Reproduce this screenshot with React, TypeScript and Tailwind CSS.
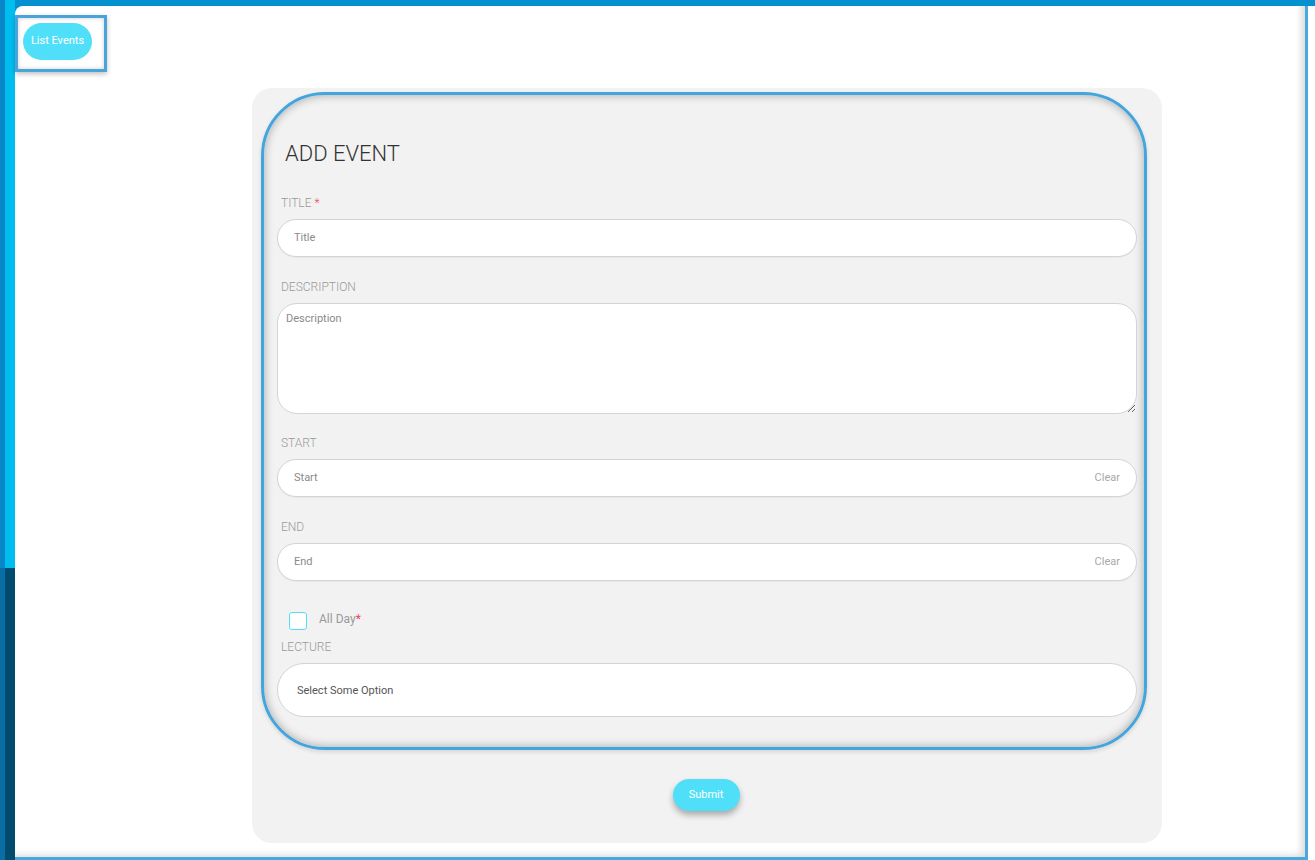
import React from "react";

function Label({ text, required }: { text: string; required?: boolean }) {
  return (
    <div className="pl-[4px] text-[12px] leading-[14px] font-light text-[#9a9a9a] uppercase">
      {text}
      {required && <span className="text-[#f0435a] ml-[3px]">*</span>}
    </div>
  );
}

function PillInput({ placeholder, clear }: { placeholder: string; clear?: boolean }) {
  return (
    <div className="mt-[9px] h-[38px] rounded-full border border-[#d4d4d4] bg-white flex items-center pl-[16px] pr-[16px] shadow-[0_1px_1px_rgba(0,0,0,0.04)]">
      <input
        placeholder={placeholder}
        className="flex-1 bg-transparent outline-none text-[11px] text-[#555] placeholder:text-[#8a8a8a]"
      />
      {clear && <span className="text-[11px] text-[#a8a8a8]">Clear</span>}
    </div>
  );
}

export default function App() {
  return (
    <div className="relative flex h-[860px] w-[1315px] overflow-hidden bg-[#0590d0] font-['Roboto',sans-serif]">
      <div className="w-[15px] flex flex-col shrink-0">
        <div className="h-[568px] flex">
          <div className="w-[5px] bg-[#0886c8]" />
          <div className="flex-1 bg-[#00bdf0]" />
        </div>
        <div className="flex-1 flex">
          <div className="w-[5px] bg-[#0a6ea6]" />
          <div className="flex-1 bg-[#014c6e]" />
        </div>
      </div>

      <div className="flex-1 flex flex-col">
        <div className="h-[6px] shrink-0" />
        <div className="flex-1 flex">
          <main className="flex-1 bg-white rounded-tl-[8px] border-r-[3px] border-b-[3px] border-[#47a9df] shadow-[inset_-8px_-6px_6px_-4px_rgba(0,0,0,0.14)]">
            <div className="mt-[9px] w-[92px] h-[57px] border-[3px] border-[#4aa3d9] shadow-[0_2px_5px_rgba(0,0,0,0.25),inset_0_0_4px_rgba(0,0,0,0.2)] pl-[5px] pt-[5px] bg-white">
              <button className="w-[69px] h-[37px] rounded-full bg-[#50dff8] text-white text-[11px]">
                List Events
              </button>
            </div>

            <div className="mt-[16px] ml-[237px] w-[910px] h-[755px] bg-[#f2f2f2] rounded-[20px] pl-[9px] pr-[15px] pt-[4px] flex flex-col">
              <div className="h-[658px] rounded-[64px] border-[3px] border-[#43a5dd] shadow-[inset_0_0_10px_rgba(0,0,0,0.32),0_2px_4px_rgba(0,0,0,0.12)] pl-[13px] pr-[7px] pt-[46px]">
                <h1 className="pl-[8px] text-[22px] leading-[26px] font-light text-[#333]">ADD EVENT</h1>

                <div className="mt-[29px]">
                  <Label text="Title" required />
                  <PillInput placeholder="Title" />
                </div>

                <div className="mt-[23px]">
                  <Label text="Description" />
                  <textarea
                    placeholder="Description"
                    className="mt-[9px] block w-full h-[111px] rounded-[20px] border border-[#d4d4d4] bg-white px-[8px] pt-[7px] text-[11px] text-[#555] outline-none placeholder:text-[#8a8a8a]"
                  />
                </div>

                <div className="mt-[22px]">
                  <Label text="Start" />
                  <PillInput placeholder="Start" clear />
                </div>

                <div className="mt-[23px]">
                  <Label text="End" />
                  <PillInput placeholder="End" clear />
                </div>

                <div className="mt-[31px] flex items-start pl-[12px]">
                  <div className="w-[18px] h-[18px] rounded-[3px] border border-[#50dff8] bg-white" />
                  <span className="ml-[12px] text-[12px] leading-[14px] text-[#9a9a9a]">
                    All Day<span className="text-[#f0435a]">*</span>
                  </span>
                </div>

                <div className="mt-[10px]">
                  <Label text="Lecture" />
                  <div className="mt-[9px] h-[54px] rounded-[27px] border border-[#d4d4d4] bg-white flex items-center pl-[19px] pt-[2px] text-[11px] text-[#555]">
                    Select Some Option
                  </div>
                </div>
              </div>

              <div className="flex justify-center mt-[29px] pl-[4px]">
                <button className="w-[67px] h-[32px] rounded-full bg-[#50dff8] text-white text-[11px] shadow-[0_4px_6px_rgba(0,0,0,0.3)]">
                  Submit
                </button>
              </div>
            </div>
          </main>
          <div className="w-[7px] bg-white" />
        </div>
      </div>
    </div>
  );
}
